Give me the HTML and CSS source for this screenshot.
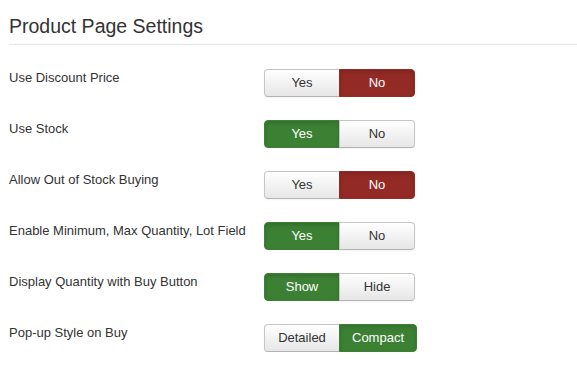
FILE: index.html
```html
<!DOCTYPE html>
<html>
<head>
<meta charset="utf-8">
<link rel="stylesheet" href="styles.css">
</head>
<body>
<div class="page">
  <h2 class="legend">Product Page Settings</h2>
  <div class="form">
    <div class="row">
      <div class="label">Use Discount Price</div>
      <div class="group"><span class="btn">Yes</span><span class="btn active-no">No</span></div>
    </div>
    <div class="row">
      <div class="label">Use Stock</div>
      <div class="group"><span class="btn active-yes">Yes</span><span class="btn">No</span></div>
    </div>
    <div class="row">
      <div class="label">Allow Out of Stock Buying</div>
      <div class="group"><span class="btn">Yes</span><span class="btn active-no">No</span></div>
    </div>
    <div class="row">
      <div class="label">Enable Minimum, Max Quantity, Lot Field</div>
      <div class="group"><span class="btn active-yes">Yes</span><span class="btn">No</span></div>
    </div>
    <div class="row">
      <div class="label">Display Quantity with Buy Button</div>
      <div class="group"><span class="btn active-yes">Show</span><span class="btn">Hide</span></div>
    </div>
    <div class="row">
      <div class="label">Pop-up Style on Buy</div>
      <div class="group"><span class="btn">Detailed</span><span class="btn active-yes">Compact</span></div>
    </div>
  </div>
</div>
</body>
</html>
```
FILE: styles.css
```css
html, body {
  margin: 0;
  padding: 0;
  background: #fff;
}
body {
  font-family: "Liberation Sans", Arial, sans-serif;
  font-size: 13px;
  color: #333;
}
.page {
  padding: 9px 0 0 9px;
}
.legend {
  margin: 0 0 24px 0;
  font-size: 19.5px;
  font-weight: normal;
  line-height: 35px;
  color: #333;
  border-bottom: 1px solid #e5e5e5;
}
.form {
  display: flex;
  flex-direction: column;
  gap: 23px;
}
.row {
  display: grid;
  grid-template-columns: 255px auto;
  align-items: start;
}
.label {
  line-height: 18px;
  padding-top: 0;
}
.group {
  display: flex;
}
.btn {
  box-sizing: border-box;
  min-width: 76px;
  height: 28px;
  padding: 0 12px;
  line-height: 26px;
  text-align: center;
  color: #333;
  background: linear-gradient(#ffffff, #e6e6e6);
  border: 1px solid #c5c5c5;
  border-bottom-color: #b3b3b3;
  box-shadow: inset 0 1px 0 rgba(255,255,255,.2), 0 1px 2px rgba(0,0,0,.05);
}
.btn:first-child {
  border-radius: 4px 0 0 4px;
}
.btn:last-child {
  border-radius: 0 4px 4px 0;
  margin-left: -1px;
}
.btn.active-no {
  background: #942a25;
  border-color: #942a25;
  color: #fff;
  box-shadow: inset 0 2px 4px rgba(0,0,0,.15);
}
.btn.active-yes {
  background: #3c8034;
  border-color: #3c8034;
  color: #fff;
  box-shadow: inset 0 2px 4px rgba(0,0,0,.15);
}
```
